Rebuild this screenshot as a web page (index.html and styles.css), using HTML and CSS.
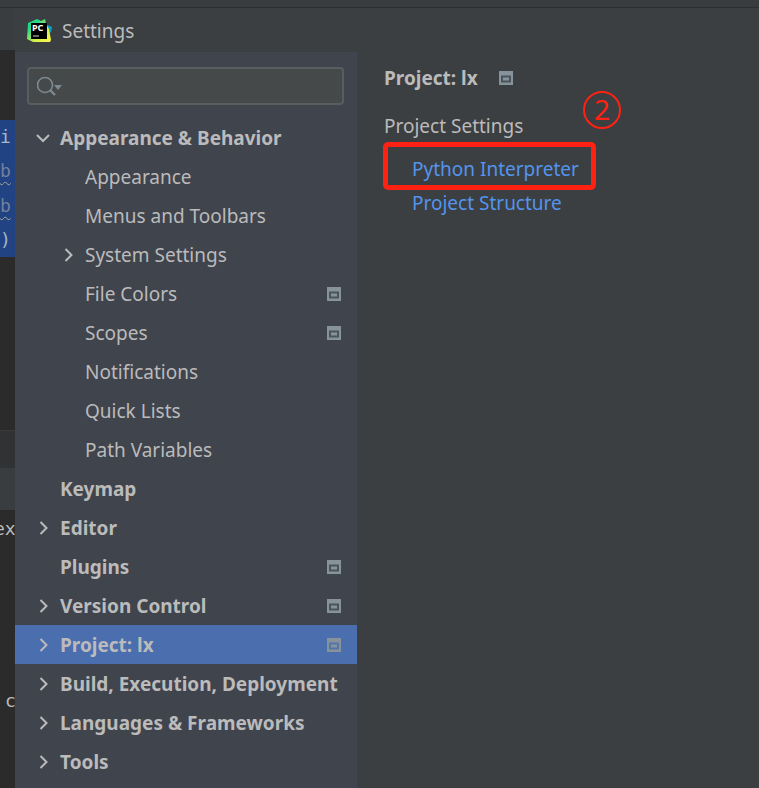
FILE: index.html
```html
<!DOCTYPE html>
<html lang="en">
<head>
<meta charset="utf-8">
<title>Settings</title>
<link rel="stylesheet" href="styles.css">
</head>
<body>
<svg class="defs" aria-hidden="true">
  <symbol id="right" viewBox="0 0 16 16"><path d="M5.5 2l6 6-6 6" fill="none" stroke="currentColor" stroke-width="2"/></symbol>
  <symbol id="down" viewBox="0 0 16 16"><path d="M2 5l6 6 6-6" fill="none" stroke="currentColor" stroke-width="2"/></symbol>
  <symbol id="scope" viewBox="0 0 14 14"><path d="M0 0h14v14H0z" fill="#87939a"/><path d="M3 5.5h8v5H3z" fill="#87939a" stroke="currentColor" stroke-width="2"/></symbol>
</svg>
<div class="ide-top"></div>
<div class="ide-side" aria-hidden="true">
  <div class="tabs"></div>
  <div class="blank"></div>
  <div class="code"><span>i</span><span class="unused">b</span><span class="unused">b</span><span>)</span></div>
  <div class="editor"></div>
  <div class="crumbs"></div>
  <div class="toolbar"></div>
  <div class="console"><span>ex</span><span class="late">c</span></div>
</div>
<div class="dialog">
  <header class="titlebar">
    <svg class="logo" viewBox="0 0 26 26">
      <defs><linearGradient id="g" x1="0" y1="0" x2="1" y2="1"><stop offset=".25" stop-color="#21d789"/><stop offset=".65" stop-color="#d8ee45"/><stop offset="1" stop-color="#fcf84a"/></linearGradient></defs>
      <path d="M19 6l7 3-1 5-4 3z" fill="#07a3d2"/>
      <path d="M2 5l9-4 4 2 4-2 1 5 3 5 2 11-1 2H7l-6-3z" fill="url(#g)"/>
      <path d="M5 5h16v16H5z" fill="#000"/>
      <path d="M7 18h6" stroke="#999" stroke-width="1.4"/>
      <text x="6" y="13" class="logo-text">PC</text>
    </svg>
    <span>Settings</span>
  </header>
  <aside class="sidebar">
    <label class="search">
      <svg viewBox="0 0 28 22"><circle cx="8" cy="10" r="7.5" fill="none" stroke="#7d8a91" stroke-width="1.6"/><path d="M13 15l5 5" stroke="#7d8a91" stroke-width="2.4"/><path d="M17 10h8l-4 5z" fill="#7d8a91"/></svg>
      <input type="text" aria-label="Search settings">
    </label>
    <ul class="tree">
      <li class="group"><svg class="arrow"><use href="#down"/></svg><span>Appearance &amp; Behavior</span></li>
      <li class="child"><i class="arrow"></i><span>Appearance</span></li>
      <li class="child"><i class="arrow"></i><span>Menus and Toolbars</span></li>
      <li class="child"><svg class="arrow"><use href="#right"/></svg><span>System Settings</span></li>
      <li class="child"><i class="arrow"></i><span>File Colors</span><svg class="scope"><use href="#scope"/></svg></li>
      <li class="child"><i class="arrow"></i><span>Scopes</span><svg class="scope"><use href="#scope"/></svg></li>
      <li class="child"><i class="arrow"></i><span>Notifications</span></li>
      <li class="child"><i class="arrow"></i><span>Quick Lists</span></li>
      <li class="child"><i class="arrow"></i><span>Path Variables</span></li>
      <li class="group"><i class="arrow"></i><span>Keymap</span></li>
      <li class="group"><svg class="arrow"><use href="#right"/></svg><span>Editor</span></li>
      <li class="group"><i class="arrow"></i><span>Plugins</span><svg class="scope"><use href="#scope"/></svg></li>
      <li class="group"><svg class="arrow"><use href="#right"/></svg><span>Version Control</span><svg class="scope"><use href="#scope"/></svg></li>
      <li class="group selected"><svg class="arrow"><use href="#right"/></svg><span>Project: lx</span><svg class="scope"><use href="#scope"/></svg></li>
      <li class="group"><svg class="arrow"><use href="#right"/></svg><span>Build, Execution, Deployment</span></li>
      <li class="group"><svg class="arrow"><use href="#right"/></svg><span>Languages &amp; Frameworks</span></li>
      <li class="group"><svg class="arrow"><use href="#right"/></svg><span>Tools</span></li>
    </ul>
  </aside>
  <main class="content">
    <h1>Project: lx <svg class="scope"><use href="#scope"/></svg></h1>
    <p>Project Settings</p>
    <nav class="links">
      <a class="marked" href="#interpreter">Python Interpreter
        <svg class="step" viewBox="0 0 38 38" role="img" aria-label="Step 2"><circle cx="19" cy="19" r="18" fill="none" stroke="#ff2113" stroke-width="2"/><text x="19" y="29" text-anchor="middle">2</text></svg>
      </a>
      <a href="#structure">Project Structure</a>
    </nav>
  </main>
</div>
</body>
</html>
```

FILE: styles.css
```css
* { box-sizing: border-box; }
body {
  margin: 0;
  min-height: 100vh;
  display: grid;
  grid-template: 8px 1fr / 15px 1fr;
  background: #2b2b2b;
  color: #bbbbbb;
  font: 19px/28px "Noto Sans", "Open Sans", sans-serif;
}
.defs { position: absolute; width: 0; height: 0; }
.ide-top { grid-column: 1 / 3; background: #3a3d3f; border-bottom: 1px solid #2d2f30; }
.ide-side {
  display: flex;
  flex-direction: column;
  overflow: hidden;
  font: 18px/34px "DejaVu Sans Mono", monospace;
  color: #a9b7c6;
}
.tabs { height: 42px; background: #3a3d3f; }
.blank { height: 70px; }
.code { height: 137px; background: #214283; display: grid; }
.unused { color: #72809a; text-decoration: underline wavy #a0a890 1px; text-underline-offset: 4px; }
.editor { height: 173px; }
.crumbs { height: 38px; background: #303234; border-top: 1px solid #3a3a3a; }
.toolbar { height: 42px; background: #3a3d3f; }
.console { flex: 1; display: flex; flex-direction: column; gap: 138px; padding-top: 2px; color: #bbbbbb; }
.console span:first-child { margin-left: -6px; }
.late { margin-left: 5px; }
.dialog {
  display: grid;
  grid-template: 44px 1fr / 342px 1fr;
  background: #3c3f41;
}
.titlebar { grid-column: 1 / 3; display: flex; align-items: center; gap: 10px; padding: 2px 0 0 11px; }
.logo { width: 26px; height: 26px; }
.logo-text { font: bold 9px "Noto Sans", sans-serif; fill: #fff; }
.sidebar { background: #40444d; }
.search {
  display: flex;
  align-items: center;
  height: 38px;
  margin: 15px 13px 13px 12px;
  padding-left: 8px;
  border: 2px solid #5a5d5f;
  border-radius: 4px;
  background: #45494a;
}
.search svg { width: 28px; height: 22px; }
.search input { flex: 1; min-width: 0; border: 0; background: none; color: inherit; font: inherit; outline: 0; }
.tree { list-style: none; margin: 0; padding: 0; }
.tree li { display: flex; align-items: center; gap: 9px; height: 39px; padding: 0 16px 0 20px; white-space: nowrap; }
.tree .child { padding-left: 45px; }
.group { font-weight: bold; }
.arrow { flex: none; width: 16px; height: 16px; }
.scope { flex: none; width: 14px; height: 14px; margin-left: auto; color: #4b535b; }
.selected { background: #4b6eaf; }
.selected .scope { color: #5574a9; }
.content { padding: 12px 27px; }
h1 { display: flex; align-items: center; gap: 20px; margin: 0; font-size: 19px; line-height: 28px; }
h1 .scope { margin: 0; width: 16px; }
.content p { margin: 20px 0 2px; }
.links { display: flex; flex-direction: column; align-items: flex-start; }
.links a { padding-left: 28px; color: #5394ec; text-decoration: none; line-height: 26px; }
.links .marked {
  position: relative;
  margin-left: -1px;
  padding: 9px 12px 3px 24px;
  border: 5px solid #ff2113;
  border-radius: 5px;
}
.step { position: absolute; right: -30px; top: -56px; width: 38px; height: 38px; }
.step text { font: 28px "Noto Sans", sans-serif; fill: #ff2113; }
```
